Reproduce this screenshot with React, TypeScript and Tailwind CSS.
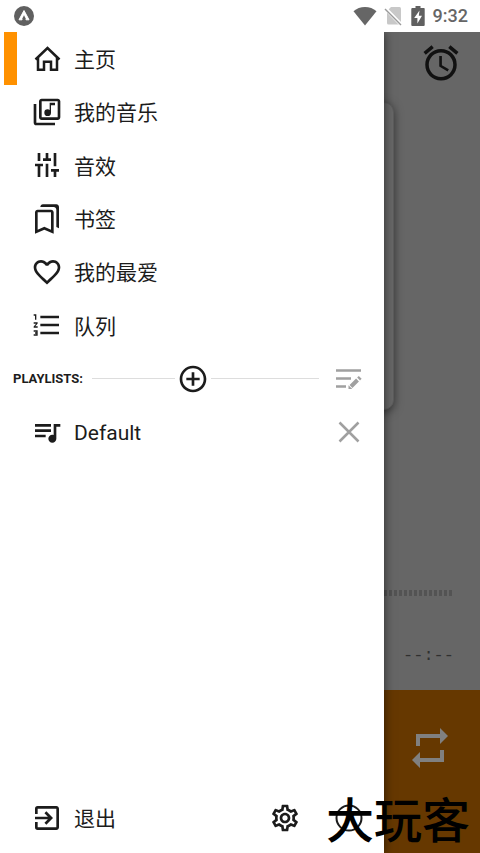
import type { ReactNode } from 'react'
import {
  MdAddCircleOutline,
  MdAlarm,
  MdExitToApp,
  MdFavoriteBorder,
  MdFormatListNumbered,
  MdOutlineBookmarks,
  MdOutlineLibraryMusic,
  MdOutlineSettings,
  MdQueueMusic,
  MdRepeat,
  MdTune,
} from 'react-icons/md'

type NavItem = {
  label: string
  icon: (props: { className?: string }) => ReactNode
  active?: boolean
  iconClass?: string
}

const HomeIcon = ({ className }: { className?: string }) => (
  <svg viewBox="0 0 32 32" className={className} fill="none" stroke="currentColor" strokeWidth="2.500">
    <path d="M4.500 16.500L16.500 5l12 11.500" />
    <path d="M7 14.500v12.300h6v-8h7v8h6V14.500" />
  </svg>
)

const navItems: NavItem[] = [
  { label: '主页', icon: HomeIcon, active: true },
  { label: '我的音乐', icon: MdOutlineLibraryMusic },
  { label: '音效', icon: MdTune, iconClass: 'rotate-90' },
  { label: '书签', icon: MdOutlineBookmarks },
  { label: '我的最爱', icon: MdFavoriteBorder },
  { label: '队列', icon: MdFormatListNumbered },
]

const StatusBar = () => (
  <header className="flex h-8 shrink-0 items-center justify-between bg-white pr-3 pl-3.5 text-[#666]">
    <svg viewBox="0 0 20 20" className="size-5">
      <circle cx="10" cy="10" r="10" fill="#606060" />
      <path d="M10 4.500l5 9.300h-3L10 9.600l-2 4.200H5z" fill="#fff" stroke="#fff" strokeLinejoin="round" />
      <path d="M10 9.200l2 4.100H8z" fill="#606060" />
    </svg>
    <div className="flex items-center">
      <svg viewBox="0 0 24 20" className="h-5 w-6">
        <path d="M.5 5.200C3.600 2.600 7.600 1 12 1s8.400 1.600 11.500 4.200L12 19.500z" fill="currentColor" />
      </svg>
      <svg viewBox="0 0 20 20" className="ml-1.5 h-5 w-5">
        <path d="M8 1h8.500a1.500 1.500 0 011.500 1.500v14.500a1.500 1.500 0 01-1.500 1.500h-11A1.500 1.500 0 014 17V5z" fill="#c8c8c8" />
        <path d="M1.500 1.500l17 17.500" stroke="#fff" strokeWidth="3.500" />
        <path d="M2 3l16 16" stroke="#9a9a9a" strokeWidth="1.500" />
      </svg>
      <svg viewBox="0 0 14 20" className="ml-2 h-5 w-3.5">
        <path d="M4.500 0h5v2H13a1 1 0 01.7 1v16a1 1 0 01-1 1H1.300a1 1 0 01-1-1V3a1 1 0 011-1h3.200z" fill="#606060" />
        <path d="M8.500 4.500L3.200 12H6.400v5.500L11 9.800H7.800z" fill="#fff" />
      </svg>
      <span className="ml-2 text-lg font-medium">9:32</span>
    </div>
  </header>
)

const Player = () => (
  <main className="flex min-h-full flex-col bg-[#666]">
    <div className="flex h-[70px] items-start justify-end pt-2.5 pr-[18px]">
      <button aria-label="Alarm" className="text-[#111]">
        <MdAlarm className="size-[42px]" />
      </button>
    </div>
    <div className="mx-[86px] h-[308px] rounded-[10px] border border-[#5c5c5c] bg-[#686868] shadow-[0_2px_10px_rgba(0,0,0,0.5)]" />
    <div className="flex-1" />
    <div className="mx-7 h-1.5 bg-[repeating-linear-gradient(to_left,#535353_0_3px,transparent_3px_5px)]" />
    <p className="mt-12 mr-[26px] mb-[22px] text-right font-['Liberation_Mono',monospace] text-[17px] leading-6 text-[#303030]">
      --:--
    </p>
    <div className="flex h-[163px] items-start justify-end bg-[#663800] pt-[34px] pr-[26px]">
      <button aria-label="Repeat" className="text-[#808080]">
        <MdRepeat className="size-12" />
      </button>
    </div>
  </main>
)

const NavButton = ({ label, icon: Icon, active, iconClass }: NavItem) => (
  <li className="flex">
    <button className="flex flex-1 items-center">
      <span className={active ? 'ml-1 h-full w-[13px] bg-[#ff9100]' : 'ml-1 w-[13px]'} />
      <Icon className={`ml-3.5 size-8 ${iconClass ?? ''}`} />
      <span className="mt-1 ml-[11px]">{label}</span>
    </button>
  </li>
)

const IconButton = ({ label, className, children }: { label: string; className?: string; children: ReactNode }) => (
  <button aria-label={label} className={className}>
    {children}
  </button>
)

const Drawer = () => (
  <aside className="absolute inset-y-0 left-0 flex w-4/5 flex-col bg-white text-[21px] text-[#1c1c1c] shadow-[0_0_10px_rgba(0,0,0,0.6)]">
    <nav>
      <ul className="grid h-80 auto-rows-fr">
        {navItems.map((item) => (
          <NavButton key={item.label} {...item} />
        ))}
      </ul>
    </nav>

    <section>
      <div className="flex h-[53px] items-center pr-[21px] pl-[13px]">
        <h2 className="w-[79px] text-[13px] font-bold">PLAYLISTS:</h2>
        <hr className="flex-1 border-[#ddd]" />
        <IconButton label="Add playlist" className="mx-0.5">
          <MdAddCircleOutline className="size-8" />
        </IconButton>
        <hr className="w-[108px] border-[#ddd]" />
        <IconButton label="Edit playlists" className="ml-4 text-[#a0a0a0]">
          <svg viewBox="0 0 28 24" className="h-6 w-7" fill="none" stroke="currentColor" strokeWidth="2.500">
            <path d="M1 3.500h25M1 11.500h15M1 19.500h10" />
            <path d="M16 19.500l6.500-6.500" strokeWidth="4" />
            <path d="M13.500 22v-3.800l3.800 3.800z" fill="currentColor" stroke="none" />
            <path d="M23.600 12l1.600-1.600" strokeWidth="4" />
          </svg>
        </IconButton>
      </div>
      <div className="flex h-[54px] items-center pr-5 pl-[31px]">
        <button className="flex flex-1 items-center">
          <MdQueueMusic className="size-8" />
          <span className="mt-1 ml-[11px]">Default</span>
        </button>
        <IconButton label="Remove playlist" className="text-[#a0a0a0]">
          <svg viewBox="0 0 30 30" className="size-[30px]" stroke="currentColor" strokeWidth="2.500">
            <path d="M5.500 5.500l19 19M24.500 5.500l-19 19" />
          </svg>
        </IconButton>
      </div>
    </section>

    <footer className="mt-auto mb-2 flex h-[54px] items-center pr-[19px] pl-[31px]">
      <button className="flex flex-1 items-center">
        <MdExitToApp className="size-8" />
        <span className="mt-1 ml-[11px]">退出</span>
      </button>
      <IconButton label="Settings">
        <MdOutlineSettings className="size-8" />
      </IconButton>
      <IconButton label="About" className="ml-8">
        <svg viewBox="0 0 32 32" className="size-8" fill="none" stroke="currentColor" strokeWidth="2">
          <circle cx="16" cy="16" r="12.500" />
        </svg>
      </IconButton>
    </footer>
  </aside>
)

const App = () => (
  <div className="flex min-h-screen flex-col font-[Roboto,'Noto_Sans_CJK_SC',sans-serif]">
    <StatusBar />
    <div className="relative grid flex-1 overflow-hidden">
      <Player />
      <Drawer />
      <p className="pointer-events-none absolute right-2.5 bottom-3 font-['Noto_Sans_CJK_SC',sans-serif] text-5xl leading-12 font-medium text-black">
        大玩客
      </p>
    </div>
  </div>
)

export default App
